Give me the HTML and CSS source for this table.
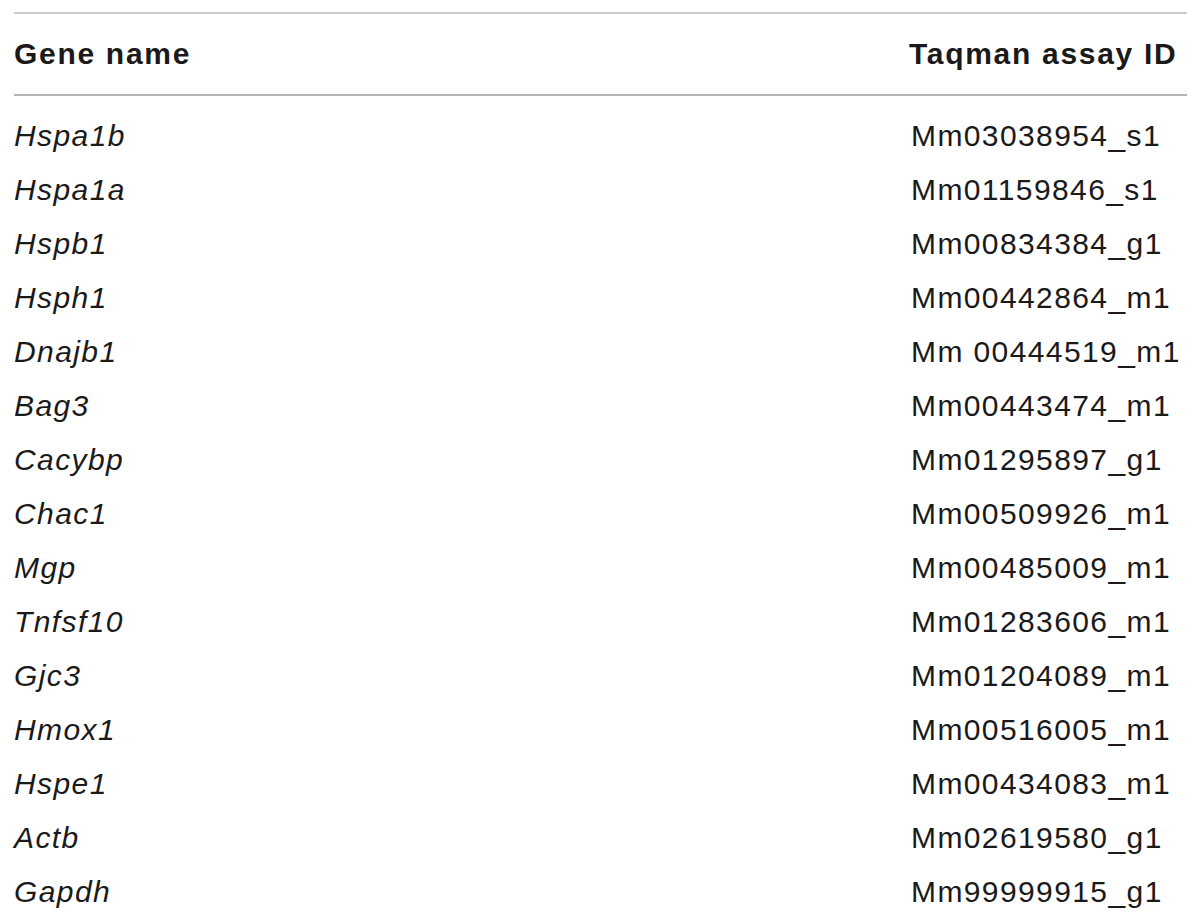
FILE: index.html
```html
<!DOCTYPE html>
<html>
<head>
<meta charset="utf-8">
<link rel="stylesheet" href="styles.css">
</head>
<body>
<div class="table">
  <div class="row head">
    <div class="cell">Gene name</div>
    <div class="cell">Taqman assay ID</div>
  </div>
  <div class="body">
    <div class="row"><div class="cell gene">Hspa1b</div><div class="cell">Mm03038954_s1</div></div>
    <div class="row"><div class="cell gene">Hspa1a</div><div class="cell">Mm01159846_s1</div></div>
    <div class="row"><div class="cell gene">Hspb1</div><div class="cell">Mm00834384_g1</div></div>
    <div class="row"><div class="cell gene">Hsph1</div><div class="cell">Mm00442864_m1</div></div>
    <div class="row"><div class="cell gene">Dnajb1</div><div class="cell">Mm 00444519_m1</div></div>
    <div class="row"><div class="cell gene">Bag3</div><div class="cell">Mm00443474_m1</div></div>
    <div class="row"><div class="cell gene">Cacybp</div><div class="cell">Mm01295897_g1</div></div>
    <div class="row"><div class="cell gene">Chac1</div><div class="cell">Mm00509926_m1</div></div>
    <div class="row"><div class="cell gene">Mgp</div><div class="cell">Mm00485009_m1</div></div>
    <div class="row"><div class="cell gene">Tnfsf10</div><div class="cell">Mm01283606_m1</div></div>
    <div class="row"><div class="cell gene">Gjc3</div><div class="cell">Mm01204089_m1</div></div>
    <div class="row"><div class="cell gene">Hmox1</div><div class="cell">Mm00516005_m1</div></div>
    <div class="row"><div class="cell gene">Hspe1</div><div class="cell">Mm00434083_m1</div></div>
    <div class="row"><div class="cell gene">Actb</div><div class="cell">Mm02619580_g1</div></div>
    <div class="row"><div class="cell gene">Gapdh</div><div class="cell">Mm99999915_g1</div></div>
  </div>
</div>
</body>
</html>
```

FILE: styles.css
```css
html, body {
  margin: 0;
  padding: 0;
  background: #ffffff;
}

body {
  font-family: "Liberation Sans", Arial, sans-serif;
  color: #1a1a1a;
  font-size: 30px;
  letter-spacing: 1.4px;
}

.table {
  margin: 12px 0 0 14px;
  width: 1173px;
  border-top: 2px solid #cccccc;
}

.row {
  display: grid;
  grid-template-columns: 897px 1fr;
  height: 54px;
  line-height: 54px;
  white-space: nowrap;
}

.row.head {
  height: 80px;
  line-height: 80px;
  font-weight: bold;
  letter-spacing: 1.7px;
  border-bottom: 2px solid #b5b5b5;
}

.head .cell:last-child {
  margin-left: -2px;
}

.body {
  padding-top: 13px;
}

.gene {
  font-style: italic;
}
```
